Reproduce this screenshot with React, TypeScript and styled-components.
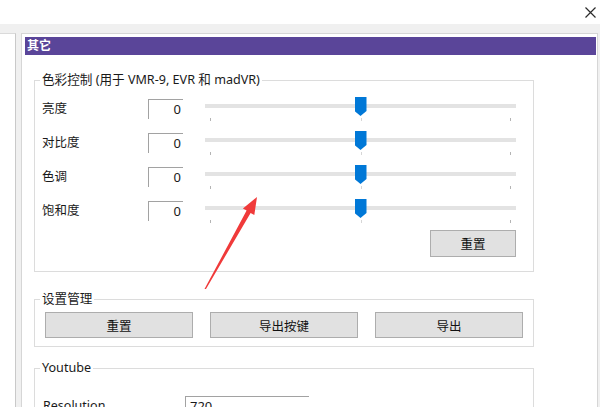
import React from "react";
import styled, { createGlobalStyle } from "styled-components";

const Global = createGlobalStyle`
  html, body { margin: 0; padding: 0; background: #fff; }
  body { font-family: "Noto Sans", "Noto Sans CJK SC", sans-serif; color: #1a1a1a; }
  * { box-sizing: border-box; }
`;

const Root = styled.div`
  position: relative;
  width: 600px;
  height: 407px;
  overflow: hidden;
  display: flex;
  flex-direction: column;
  background: #fff;
`;

const TitleBar = styled.div`
  height: 24px;
  flex: none;
  display: flex;
  justify-content: flex-end;
  align-items: flex-start;
  padding: 7px 4px 0 0;
  background: #fff;
`;

const Body = styled.div`
  flex: 1;
  min-height: 0;
  display: flex;
  align-items: stretch;
  background: #f0f0f0;
  padding-top: 9px;
`;

const SidePanel = styled.div`
  width: 16px;
  flex: none;
  background: #fff;
  border-top: 1px solid #dadada;
  border-right: 1px solid #c9c9c9;
`;

const MainPanel = styled.div`
  flex: 1;
  margin-left: 5px;
  margin-right: 2px;
  background: #fff;
  border: 1px solid #d6d6d6;
  border-bottom: none;
  padding: 3px 1px 0 3px;
  display: flex;
  flex-direction: column;
  min-width: 0;
`;

const SectionHeader = styled.div`
  height: 18px;
  background: #5a4599;
  color: #fff;
  font-size: 12px;
  font-weight: 700;
  line-height: 18px;
  padding-left: 2px;
`;

const Content = styled.div`
  padding: 17px 0 0 9px;
  display: flex;
  flex-direction: column;
`;

const Group = styled.fieldset<{ $gap?: number }>`
  width: 500px;
  margin: ${(p) => p.$gap ?? 0}px 0 0 0;
  padding: 0 16px 14px 5px;
  border: 1px solid #dcdcdc;
  min-width: 0;
`;

const Legend = styled.legend`
  padding: 0 2px;
  font-size: 12.6px;
  line-height: 16px;
  color: #1a1a1a;
`;

const Row = styled.div<{ $first?: boolean }>`
  display: flex;
  align-items: center;
  height: 20px;
  margin-top: ${(p) => (p.$first ? 11 : 14)}px;
  padding-left: 2px;
`;

const Label = styled.span<{ $w?: number }>`
  width: ${(p) => p.$w ?? 106}px;
  flex: none;
  font-size: 12.5px;
  line-height: 16px;
  color: #1a1a1a;
`;

const NumBox = styled.div<{ $w?: number; $align?: string }>`
  width: ${(p) => p.$w ?? 35}px;
  height: 20px;
  flex: none;
  border-top: 1px solid #a2a2a2;
  border-left: 1px solid #a2a2a2;
  font-size: 13px;
  line-height: 19px;
  text-align: ${(p) => p.$align ?? "right"};
  padding: 0 2px 0 4px;
  color: #1a1a1a;
`;

const SliderBox = styled.div`
  position: relative;
  width: 311px;
  height: 20px;
  margin-left: 22px;
  flex: none;
`;

const Track = styled.div`
  position: absolute;
  left: 0;
  right: 0;
  top: 5px;
  height: 4px;
  background: #e3e3e3;
`;

const Thumb = styled.div`
  position: absolute;
  top: -2px;
  width: 12px;
  height: 19px;
  margin-left: -6px;
  background: #0078d7;
  clip-path: polygon(0 0, 100% 0, 100% 74%, 50% 100%, 0 74%);
`;

const Tick = styled.div<{ $faint?: boolean }>`
  position: absolute;
  top: 19px;
  width: 1px;
  height: 3px;
  background: ${(p) => (p.$faint ? "#d6d6d6" : "#b4b4b4")};
`;

const RightAlign = styled.div`
  display: flex;
  justify-content: flex-end;
  margin-top: 9px;
  margin-right: 1px;
`;

const Button = styled.button<{ $w?: number; $h?: number }>`
  width: ${(p) => (p.$w ? `${p.$w}px` : "auto")};
  height: ${(p) => p.$h ?? 26}px;
  background: #e1e1e1;
  border: 1px solid #adadad;
  border-radius: 0;
  font-family: "Noto Sans", "Noto Sans CJK SC", sans-serif;
  font-size: 12.5px;
  color: #111;
  padding: 0;
`;

const ButtonGrid = styled.div`
  display: grid;
  grid-template-columns: repeat(3, 148px);
  column-gap: 17px;
  margin: 5px 0 0 5px;
`;

const YtRow = styled.div`
  display: flex;
  align-items: center;
  margin-top: 20px;
  padding-left: 3px;
`;

const Overlay = styled.svg`
  position: absolute;
  left: 0;
  top: 0;
  pointer-events: none;
`;

function Slider({ value, min, max }: { value: number; min: number; max: number }) {
  const pct = ((value - min) / (max - min)) * 100;
  return (
    <SliderBox>
      <Track />
      <Tick style={{ left: 5 }} />
      <Tick $faint style={{ left: `${pct}%` }} />
      <Tick style={{ right: 5 }} />
      <Thumb style={{ left: `${pct}%` }} />
    </SliderBox>
  );
}

const rows = ["亮度", "对比度", "色调", "饱和度"];

export default function App() {
  return (
    <>
      <Global />
      <Root>
        <TitleBar>
          <svg width="11" height="11" viewBox="0 0 11 11">
            <path d="M0.5 0.5 L10.5 10.5 M10.5 0.5 L0.5 10.5" stroke="#2b2b2b" strokeWidth="1.2" fill="none" />
          </svg>
        </TitleBar>
        <Body>
          <SidePanel />
          <MainPanel>
            <SectionHeader>其它</SectionHeader>
            <Content>
              <Group>
                <Legend>色彩控制 (用于 VMR-9, EVR 和 madVR)</Legend>
                {rows.map((r, i) => (
                  <Row key={r} $first={i === 0}>
                    <Label>{r}</Label>
                    <NumBox>0</NumBox>
                    <Slider value={0} min={-100} max={100} />
                  </Row>
                ))}
                <RightAlign>
                  <Button $w={86} $h={27}>重置</Button>
                </RightAlign>
              </Group>
              <Group $gap={19} style={{ paddingBottom: 8 }}>
                <Legend>设置管理</Legend>
                <ButtonGrid>
                  <Button>重置</Button>
                  <Button>导出按键</Button>
                  <Button>导出</Button>
                </ButtonGrid>
              </Group>
              <Group $gap={13}>
                <Legend>Youtube</Legend>
                <YtRow>
                  <Label $w={142}>Resolution</Label>
                  <NumBox $w={124} $align="left">720</NumBox>
                </YtRow>
              </Group>
            </Content>
          </MainPanel>
        </Body>
        <Overlay width="600" height="407" viewBox="0 0 600 407">
          <polygon
            points="257,197 242.9,208.6 246.6,210.6 204.5,289 206,289 250.6,213 254.3,215"
            fill="#f03a3a"
          />
        </Overlay>
      </Root>
    </>
  );
}
